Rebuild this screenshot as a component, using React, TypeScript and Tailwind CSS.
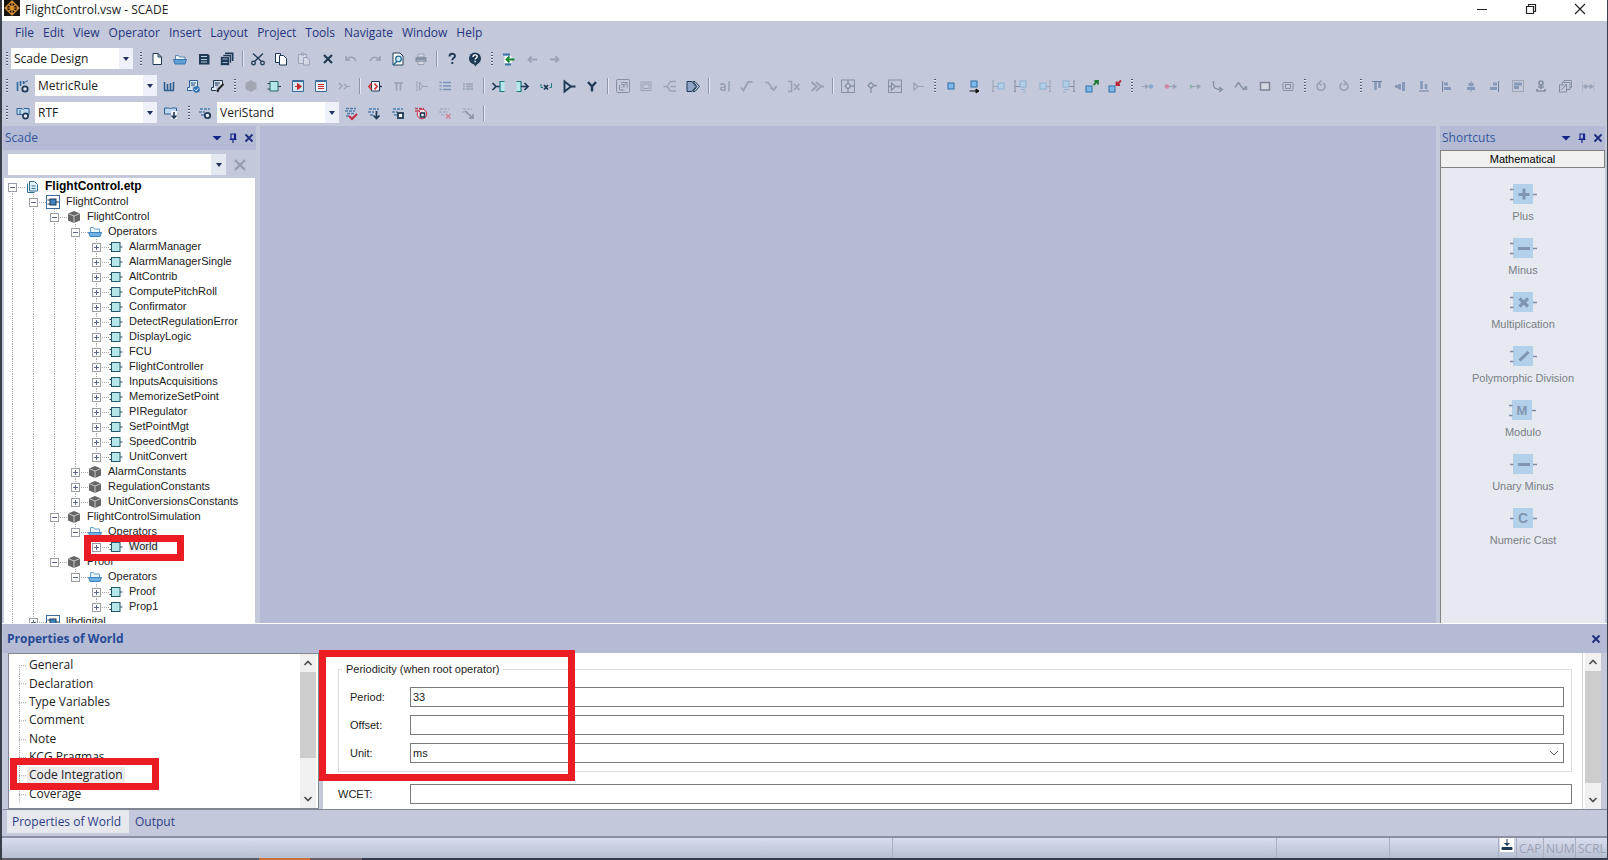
import { ReactNode, useState } from "react";

const NAVY = "#1f3a56";
const GRAY = "#99a2b6";
const BLUE = "#5f9fd6";
const TEAL = "#b5e6ea";

// ---------- toolbar glyphs, all on a 16x16 grid ----------

const nodeSquare = (x: number, y: number, fill = "#7db8ea", stroke = "#2f6fa8") => (
  <rect x={x} y={y} width="6" height="6" fill={fill} stroke={stroke} />
);

const glyphs: Record<string, ReactNode> = {
  newFile: <path d="M4 2.5h5l3.5 3.5v7.5h-8.500z M9 2.500v3.500h3.500" fill="#fff" stroke={NAVY} />,
  open: (
    <>
      <path d="M3.500 9V4.500h3l1 1.500h5.500V9" fill="#e8f3fb" stroke="#5b86ad" />
      <path d="M1.500 8.500h13l-1.500 4.500h-10z" fill={BLUE} stroke="#3c76a8" />
    </>
  ),
  save: (
    <>
      <path d="M3 3h9l1.500 1.500V13.500H3z" fill={NAVY} />
      <path d="M5 5.500h6M5 8.500h6M5 11h6" stroke="#bcd0e2" />
    </>
  ),
  saveAll: (
    <>
      <path d="M6 1.500h8.500v8.500H6z" fill={NAVY} />
      <path d="M4 3.500h8.500v8.500H4z" fill={NAVY} stroke="#c3c9da" strokeWidth=".7" />
      <path d="M1.500 5.500h9V14.500h-9z" fill={NAVY} stroke="#c3c9da" strokeWidth=".7" />
      <path d="M3.500 8h5M3.500 11.500h5" stroke="#9fb9d0" />
    </>
  ),
  cut: (
    <g fill="none" stroke={NAVY} strokeWidth="1.300">
      <path d="M3 2.500l8.500 8M13 2.500L4.500 10.500" />
      <circle cx="3.500" cy="12" r="1.800" />
      <circle cx="12.500" cy="12" r="1.800" />
    </g>
  ),
  copy: (
    <g fill="#fff" stroke={NAVY}>
      <path d="M2.500 2.500h5v9h-5z" />
      <path d="M6.500 4.500h4l3 3v6.500h-7z" />
    </g>
  ),
  paste: (
    <g fill="#d3d8e4" stroke={GRAY}>
      <path d="M2.500 3.500h8v9h-8z M5 2h3v2H5z" />
      <path d="M7.500 6.500h3.500l2.500 2.500v5h-6z" />
    </g>
  ),
  delete: <path d="M4 4l8 8M12 4l-8 8" stroke={NAVY} strokeWidth="2.200" />,
  undo: <path d="M3 5v4h4M3.500 8.500c3-3.500 7.500-3 9.500 1.500" fill="none" stroke={GRAY} strokeWidth="1.600" />,
  redo: <path d="M13 5v4H9M12.500 8.500c-3-3.500-7.500-3-9.500 1.500" fill="none" stroke={GRAY} strokeWidth="1.600" />,
  preview: (
    <>
      <path d="M3 2h7l3 3v9H3z" fill="#fff" stroke={NAVY} />
      <circle cx="8.500" cy="8" r="2.800" fill="#cfe8f5" stroke="#1f6f8e" strokeWidth="1.300" />
      <path d="M6.500 10.500L3.500 14" stroke="#1f6f8e" strokeWidth="1.500" />
    </>
  ),
  print: (
    <>
      <path d="M5 3h6v3H5z M5 10.500h6v3H5z" fill="#d3d8e4" stroke={GRAY} />
      <path d="M2.500 6h11v5h-2v-1.500h-7V11h-2z" fill="#8791a6" />
    </>
  ),
  help: <path d="M5.500 5.500c0-3.500 5.500-3.500 5.500-.5 0 2-2.700 2-2.700 4.300M8.300 11v2" fill="none" stroke={NAVY} strokeWidth="1.900" />,
  about: (
    <>
      <circle cx="8" cy="7.500" r="6" fill={NAVY} />
      <path d="M6 12l2.500 3.500L11 12z" fill={NAVY} />
      <path d="M6 6c0-2.800 4.200-2.800 4.200-.4 0 1.600-2.100 1.600-2.100 3M8.100 9.800v1.500" fill="none" stroke="#fff" strokeWidth="1.400" />
    </>
  ),
  goBack: (
    <>
      <path d="M3 3.500h7M5 13.500h6" stroke="#3c76a8" strokeWidth="2" />
      <path d="M4.500 5h7v7h-7z" fill="#fff" />
      <path d="M14.500 8.500H7M9.500 5.500l-3 3 3 3" fill="none" stroke="#1c8a35" strokeWidth="1.900" />
    </>
  ),
  left: <path d="M13 8.500H4M7.500 5.500l-3 3 3 3" fill="none" stroke={GRAY} strokeWidth="1.800" />,
  right: <path d="M3 8.500h9M8.500 5.500l3 3-3 3" fill="none" stroke={GRAY} strokeWidth="1.800" />,
  metricGear: (
    <>
      <path d="M2.500 4v9M5.500 3v5M8.500 3v3" stroke="#2d6a9c" strokeWidth="1.600" />
      <path d="M8 5.500l5-3" stroke="#2d6a9c" />
      <circle cx="10" cy="11" r="2.700" fill="#dfe6f0" stroke={NAVY} strokeWidth="1.800" />
    </>
  ),
  bars: <path d="M3.500 4v8M6.500 6v6M9.500 5v7M12.500 4v8M3 12.500h10" stroke="#2d5f92" strokeWidth="1.600" />,
  checkDoc: (
    <>
      <path d="M4.500 2.500h8v7M4.500 2.500v7h-2v3h5" fill="#d9ecf8" stroke="#2d5f92" />
      <path d="M6 5h5M6 7h4" stroke="#2d5f92" />
      <circle cx="11.500" cy="11.500" r="3.300" fill="#2f74b5" />
      <path d="M9.800 11.500l1.300 1.300 2.200-2.400" fill="none" stroke="#fff" />
    </>
  ),
  editDoc: (
    <>
      <path d="M3.500 2.500h9v5M3.500 2.500v7h-2v3h5" fill="#e3e8f0" stroke={NAVY} />
      <path d="M5 5h5M5 7h3" stroke={NAVY} />
      <path d="M7.500 14l1-3 5-5" stroke="#222" strokeWidth="2" fill="none" />
    </>
  ),
  hexagon: <path d="M8 2l5.500 3v6L8 14l-5.500-3V5z" fill="#a2a7b2" />,
  block: (
    <>
      <path d="M1.500 5.500H4M1.500 11H4M12 8.500h3" stroke={NAVY} />
      <path d="M4 3.500h8v9.500H4z" fill={TEAL} stroke="#27685f" />
    </>
  ),
  blockArrow: (
    <>
      <path d="M2.500 2.500h11v11h-11z" fill="#d6e6f4" stroke="#3a6d9c" />
      <path d="M3 3.500h10" stroke="#3a6d9c" />
      <path d="M5 8.500h4M7.500 5.500l4 3-4 3z" fill="#c32a2a" stroke="#c32a2a" />
    </>
  ),
  blockList: (
    <>
      <path d="M2.500 2.500h11v11h-11z" fill="#eef3f9" stroke="#3a6d9c" />
      <path d="M3 3.500h10" stroke="#3a6d9c" />
      <path d="M5 6.500h6M5 8.500h6M5 10.500h6" stroke="#c32a2a" strokeWidth="1.200" />
    </>
  ),
  chevPair: <path d="M3 5l3 3-3 3M8 6l3 2.500L8 11M11 8.500h3" fill="none" stroke={GRAY} strokeWidth="1.200" />,
  redGate: (
    <>
      <path d="M12.500 8.500h2.500" stroke={NAVY} strokeWidth="1.400" />
      <path d="M4.500 3.500h8v9.500h-8z" fill="#eef1f7" stroke={NAVY} />
      <path d="M4.500 5.500L2 8.500l2.500 3M7.500 5.500l2.500 3-2.500 3" fill="none" stroke="#d0342c" strokeWidth="1.700" />
    </>
  ),
  pi: <path d="M4 5h9M6.500 5v7.500M10.500 5v7.500" stroke={GRAY} strokeWidth="1.700" fill="none" />,
  fan: <path d="M3 3v10M5.500 4v8M5.500 4l3 4.500-3 4M8 8.500h6" stroke={GRAY} fill="none" />,
  lines: <path d="M2.500 4.500h2M2.500 8h2M2.500 11.500h2M6 4.500h8M6 8h8M6 11.500h8" stroke="#7b93bd" strokeWidth="1.400" />,
  linesGray: <path d="M3 6h2M3 8.500h2M3 11h2M6 6h7M6 8.500h7M6 11h7" stroke={GRAY} strokeWidth="1.300" />,
  inBracket: (
    <>
      <path d="M1.500 5l3.500 3.500L1.500 12M5 8.500h4" fill="none" stroke={NAVY} strokeWidth="1.700" />
      <path d="M13.500 3.500H9v10h4.500" fill={TEAL} stroke="#1f7a80" strokeWidth="1.200" />
    </>
  ),
  outBracket: (
    <>
      <path d="M2.500 3.500H7v10H2.500" fill={TEAL} stroke="#1f7a80" strokeWidth="1.200" />
      <path d="M7 8.500h7M10.500 5l3.500 3.500-3.500 3.500" fill="none" stroke={NAVY} strokeWidth="1.700" />
    </>
  ),
  cross: (
    <>
      <path d="M6 7l4 4.500M10 7l-4 4.500" stroke={NAVY} strokeWidth="1.800" />
      <path d="M3 6v3.500h2M13.500 5v4.500h-2" fill="none" stroke="#1f7a80" />
    </>
  ),
  triangle: <path d="M3.500 3.500v10l6.500-5zM10 8.500h4.500" fill="none" stroke={NAVY} strokeWidth="1.900" />,
  fork: <path d="M4 4l4 4.500 4-4.500M8 8v5.500" fill="none" stroke={NAVY} strokeWidth="2.400" />,
  frameEdit: (
    <g fill="none" stroke="#8690a5">
      <rect x="1.500" y="1.500" width="13" height="13" rx="1" />
      <path d="M6 4.500h6v5M4.500 7v5h5M6 6.500h3v3M12 4.500l-5 5" />
    </g>
  ),
  frame: <path d="M3 4h10v8.500H3zM5 6h6v4.500H5z" fill="none" stroke={GRAY} />,
  split: <path d="M1.500 8.500H5M14 3.500H8.500L5 8.500l3.500 4.500H14M8 8.500h6" fill="none" stroke={GRAY} strokeWidth="1.300" />,
  tagArrow: (
    <>
      <path d="M2 3.500h5l4 5-4 5H2z" fill="#8fa3c4" stroke={NAVY} />
      <path d="M8 3.500h2l4.500 5-4.500 5H8l4-5z" fill="#c7d0e2" stroke={NAVY} />
    </>
  ),
  textA: <path d="M4 6.500c4-1.500 5 0 5 1.500v5M9 9c-6-.5-6 4 0 3M13 3v10.500" fill="none" stroke={GRAY} strokeWidth="1.600" />,
  tick: <path d="M2 9.500l2.500 3L9 4h4.500" fill="none" stroke={GRAY} strokeWidth="1.900" />,
  bend: <path d="M2 4.500h3l5 7h1M13.500 8l-2.500 4-3.500-2" fill="none" stroke={GRAY} strokeWidth="1.700" />,
  bracketX: <path d="M2 3.500h3.500v10H2M8 6l5.500 6M13.500 6L8 12" fill="none" stroke={GRAY} strokeWidth="1.600" />,
  chevDouble: <path d="M2.500 4l5 4.500-5 4.500M7 4l5 4.500L7 13M12 8.500h3" fill="none" stroke={GRAY} strokeWidth="1.900" />,
  diamondFrame: (
    <g fill="none" stroke="#8690a5">
      <rect x="1.500" y="2" width="13" height="12.500" />
      <path d="M8 2v3M8 11v3.500M11 8h3.500M8 5l3 3-3 3-3-3z" strokeWidth="1.300" />
    </g>
  ),
  diamond: <path d="M8 4.500l3 3-3 3-3-3zM11 7.500h3M8 10.500V15" fill="none" stroke="#8690a5" strokeWidth="1.300" />,
  arrowFrame: (
    <g fill="none" stroke="#8690a5">
      <rect x="1.500" y="2" width="13" height="12.500" />
      <path d="M4.500 5v7l4-3.500zM8.500 8.500h5M2 8.500h2" strokeWidth="1.300" />
    </g>
  ),
  arrowThin: <path d="M4 5v7l4-3.500zM8 8.500h6" fill="none" stroke={GRAY} strokeWidth="1.200" />,
  sq: nodeSquare(5, 5),
  sqArrow: (
    <>
      {nodeSquare(5, 3)}
      <path d="M3.500 13H12M10 11l3 2-3 2z" stroke="#111" fill="#111" />
    </>
  ),
  distL: (
    <>
      <path d="M2 3h2M2 13.500h2M3 3v10M3 8.500h5" stroke={GRAY} />
      {nodeSquare(8, 5, "#b2cfe9", "#8fb0d2")}
    </>
  ),
  distLs: (
    <>
      <path d="M1 3h2M1 13.500h2M2 3v10M2 8.500h5" stroke="#8690a5" />
      {nodeSquare(7, 3, "#b2cfe9", "#8fb0d2")}
      <path d="M8 11.500h4M10 14h3" stroke="#8fb0d2" />
    </>
  ),
  distR: (
    <>
      <path d="M12 3h2M12 13.500h2M13 3v10M9 8.500h4" stroke={GRAY} />
      {nodeSquare(3, 5, "#b2cfe9", "#8fb0d2")}
    </>
  ),
  distRs: (
    <>
      <path d="M13 3h2M13 13.500h2M14 3v10M9 8.500h5" stroke="#8690a5" />
      {nodeSquare(3, 3, "#b2cfe9", "#8fb0d2")}
      <path d="M4 11.500h5M3 14h3" stroke="#8fb0d2" />
    </>
  ),
  expand: (
    <>
      {nodeSquare(2, 8)}
      <path d="M9.500 7l4-4M10.500 3H14v3.500" stroke="#1f7a35" strokeWidth="1.800" fill="none" />
    </>
  ),
  shrink: (
    <>
      {nodeSquare(2, 8)}
      <path d="M14 2.500l-4 4M9.500 3.500v3.500h3.500" stroke="#b32435" strokeWidth="1.800" fill="none" />
    </>
  ),
  linkIn: (
    <>
      <path d="M1.500 8.500h7M5.500 6.500l3 2-3 2z" stroke={GRAY} fill={GRAY} />
      <circle cx="11" cy="8.500" r="2.300" fill="#8ba6cc" />
    </>
  ),
  linkOut: (
    <>
      <circle cx="4" cy="8.500" r="2.300" fill="#cf8ba0" />
      <path d="M6 8.500h7M10.500 6.500l3 2-3 2z" stroke={GRAY} fill={GRAY} />
    </>
  ),
  linkTri: (
    <>
      <path d="M3 6l4 2.500L3 11z" fill="#8fb3ae" />
      <path d="M6 8.500h7M10.500 6.500l3 2-3 2z" stroke={GRAY} fill={GRAY} />
    </>
  ),
  curve: <path d="M3.500 3v4c0 4 3 4.500 7 4.500M10 9.500l2.500 2-2.500 2z" fill="none" stroke="#8690a5" strokeWidth="1.300" />,
  wave: <path d="M2 9.500l3.500-5 5 7 2-1M11 9l2.500 0v3" fill="none" stroke="#8690a5" strokeWidth="1.400" />,
  rect: <rect x="3.500" y="4.500" width="9" height="7.500" fill="#d4d8e2" stroke="#7c8494" strokeWidth="1.500" />,
  rect2: (
    <g fill="none" stroke="#8a92a4">
      <rect x="3" y="4.500" width="10" height="8" rx="1" />
      <rect x="5.500" y="6.500" width="5" height="4" />
    </g>
  ),
  rotL: <path d="M6 5a4 4 0 1 0 4 0M8.500 2.500L6 5l2.500 2.500" fill="none" stroke={GRAY} strokeWidth="1.700" />,
  rotR: <path d="M10 5a4 4 0 1 1-4 0M7.500 2.500L10 5 7.500 7.500" fill="none" stroke={GRAY} strokeWidth="1.700" />,
  alignT: (
    <>
      <path d="M6.500 4v8M10.500 4v6" stroke="#8699b8" strokeWidth="2.600" />
      <path d="M3 3.500h10" stroke="#6f7f9c" />
    </>
  ),
  alignM: <path d="M3 8.500h3M7.500 6v5.500M11.500 4v9" stroke="#8699b8" strokeWidth="3" />,
  alignB: (
    <>
      <path d="M5.500 3v8M10 6v5" stroke="#8699b8" strokeWidth="2.600" />
      <path d="M3 13h10" stroke="#6f7f9c" />
    </>
  ),
  alignL: (
    <>
      <path d="M5 6h4M5 10.500h7" stroke="#8699b8" strokeWidth="3" />
      <path d="M3.500 3v11" stroke="#6f7f9c" />
    </>
  ),
  alignC: (
    <>
      <path d="M8 3v11" stroke="#8699b8" />
      <path d="M5.500 6.500h5M4 10.500h8" stroke="#8699b8" strokeWidth="3" />
    </>
  ),
  alignR: (
    <>
      <path d="M7 6h4M4 10.500h7" stroke="#8699b8" strokeWidth="3" />
      <path d="M12.500 3v11" stroke="#6f7f9c" />
    </>
  ),
  gridBox: (
    <>
      <rect x="2.500" y="2.500" width="11" height="11" fill="none" stroke="#7f8899" strokeDasharray="1 1" />
      <path d="M4 6h8M4 9.500h5" stroke="#8699b8" strokeWidth="3" />
    </>
  ),
  anchor: (
    <g fill="none" stroke="#8690a5" strokeWidth="1.700">
      <circle cx="8" cy="5" r="2" />
      <path d="M8 7v4M5 9h6M4 11v2h8v-2" />
    </g>
  ),
  cubes: (
    <g fill="none" stroke="#8690a5">
      <rect x="2.500" y="7" width="7" height="7" />
      <path d="M5 7V4.500h8v7H9.500M7 4.500V2.500h7.500v7H13M4 12l6-6" />
    </g>
  ),
  fitWidth: (
    <>
      <path d="M2.500 3.500v10M14 3.500v10" stroke="#b0b7c8" />
      <path d="M4 8.500h8.500M6.500 6.500L4 8.500l2.500 2M10 6.500l2.500 2-2.500 2" fill="none" stroke={GRAY} strokeWidth="1.600" />
    </>
  ),
  bookGear: (
    <>
      <path d="M2 3.500h5l1 1 1-1h5v6H2z" fill="#bcd8ee" stroke="#2d5f92" />
      <path d="M4 6h2M4 8h2" stroke="#2d5f92" />
      <circle cx="10.500" cy="11" r="2.600" fill="#e6edf5" stroke={NAVY} strokeWidth="1.700" />
    </>
  ),
  bookDown: (
    <>
      <path d="M1.500 3h5l1 1 1-1h5v6h-12z" fill="#bcd8ee" stroke="#2d5f92" />
      <path d="M8 6h6v8H8z" fill="#f2f5fa" />
      <path d="M11 7v6M8.500 10.500L11 13l2.500-2.500" fill="none" stroke={NAVY} strokeWidth="1.600" />
    </>
  ),
  codeGear: (
    <>
      <path d="M3 4h10M2 7h6M4 10h3" stroke="#4f7fae" strokeWidth="1.400" strokeDasharray="3 1" />
      <circle cx="10.500" cy="10.500" r="2.700" fill="#e6edf5" stroke={NAVY} strokeWidth="1.800" />
    </>
  ),
  codeCheck: (
    <>
      <path d="M3 3.500h10M2 6h10M4 8.500h8M3 11h3" stroke="#4f7fae" strokeWidth="1.400" strokeDasharray="3 1" />
      <path d="M6 11l3 3 5-5" fill="none" stroke="#c32a44" strokeWidth="2" />
    </>
  ),
  codeDown: (
    <>
      <path d="M3 4h10M2 7h6M4 10h3" stroke="#4f7fae" strokeWidth="1.400" strokeDasharray="3 1" />
      <path d="M10.500 6v7M7.500 10.500l3 3 3-3" fill="none" stroke={NAVY} strokeWidth="1.700" />
    </>
  ),
  codeStop: (
    <>
      <path d="M3 4h10M2 7h6M4 10h3" stroke="#4f7fae" strokeWidth="1.400" strokeDasharray="3 1" />
      <rect x="8" y="8" width="5" height="5" fill="#fff" stroke={NAVY} strokeWidth="1.800" />
    </>
  ),
  codeCancel: (
    <>
      <path d="M2 3.500h9M2 6h3" stroke="#b3475c" strokeWidth="1.400" strokeDasharray="3 1" />
      <circle cx="9" cy="9" r="4.800" fill="#f3dfe4" stroke="#c32a44" />
      <rect x="7.500" y="8" width="4" height="4" fill="#fff" stroke={NAVY} strokeWidth="1.600" />
      <path d="M5.500 5.500l3 3" stroke="#c32a44" />
    </>
  ),
  codeX: (
    <>
      <path d="M3 4h9M2 7h9M4 10h4" stroke={GRAY} strokeWidth="1.200" strokeDasharray="3 1" />
      <path d="M9 9l4.500 4.500M13.500 9L9 13.500" stroke="#cf7f92" strokeWidth="1.400" />
    </>
  ),
  codeArrow: (
    <>
      <path d="M3 4h9M2 7h6" stroke={GRAY} strokeWidth="1.200" strokeDasharray="3 1" />
      <path d="M5 6l8 7M13 9v4H9" stroke="#8690a5" strokeWidth="1.500" fill="none" />
    </>
  ),
};

const Tool = ({ name }: { name: string }) => (
  <button type="button" aria-label={name} className="flex min-w-0 flex-1 items-center justify-center">
    <svg viewBox="0 0 16 16" className="size-4 shrink-0">{glyphs[name]}</svg>
  </button>
);

const Group = ({ names, width }: { names: string[]; width: string }) => (
  <div className={"flex h-full shrink-0 " + width}>
    {names.map((n) => <Tool key={n} name={n} />)}
  </div>
);

const Sep = () => (
  <div className="flex w-[7px] shrink-0 justify-center">
    <div className="h-4 w-px bg-[#8d96ad] shadow-[1px_0_0_#e4e8f2]" />
  </div>
);

const Dots = () => (
  <div className="flex w-[9px] shrink-0 flex-col items-center gap-[2px]">
    {[0, 1, 2, 3, 4].map((i) => (
      <div key={i} className="h-px w-[2px] bg-[#4b5470] shadow-[0_1px_0_#e4e8f2]" />
    ))}
  </div>
);

const ToolSelect = ({ label, value }: { label: string; value: string }) => (
  <div className="relative h-[21px] w-[122px] shrink-0">
    <select aria-label={label} className="h-full w-full appearance-none bg-white pl-[3px] text-xs leading-5 text-[#222]">
      <option>{value}</option>
    </select>
    <div className="pointer-events-none absolute inset-y-0 right-0 flex w-[14px] items-center justify-center bg-[#eef1f7]">
      <svg viewBox="0 0 6 4" className="h-1 w-[6px]"><path d="M0 0h6L3 4z" fill="#20305e" /></svg>
    </div>
  </div>
);

// ---------- project tree ----------

type TreeRow = { level: number; label: string; icon: "doc" | "model" | "cube" | "folder" | "op"; open?: boolean };

const operators = [
  "AlarmManager", "AlarmManagerSingle", "AltContrib", "ComputePitchRoll", "Confirmator",
  "DetectRegulationError", "DisplayLogic", "FCU", "FlightController", "InputsAcquisitions",
  "MemorizeSetPoint", "PIRegulator", "SetPointMgt", "SpeedContrib", "UnitConvert",
];

const tree: TreeRow[] = [
  { level: 0, label: "FlightControl.etp", icon: "doc", open: true },
  { level: 1, label: "FlightControl", icon: "model", open: true },
  { level: 2, label: "FlightControl", icon: "cube", open: true },
  { level: 3, label: "Operators", icon: "folder", open: true },
  ...operators.map((label): TreeRow => ({ level: 4, label, icon: "op" })),
  { level: 3, label: "AlarmConstants", icon: "cube" },
  { level: 3, label: "RegulationConstants", icon: "cube" },
  { level: 3, label: "UnitConversionsConstants", icon: "cube" },
  { level: 2, label: "FlightControlSimulation", icon: "cube", open: true },
  { level: 3, label: "Operators", icon: "folder", open: true },
  { level: 4, label: "World", icon: "op" },
  { level: 2, label: "Proof", icon: "cube", open: true },
  { level: 3, label: "Operators", icon: "folder", open: true },
  { level: 4, label: "Proof", icon: "op" },
  { level: 4, label: "Prop1", icon: "op" },
  { level: 1, label: "libdigital", icon: "model" },
];

const treeIcons: Record<TreeRow["icon"], ReactNode> = {
  doc: (
    <>
      <path d="M2.500 3.500v9h7" fill="none" stroke="#2f6c96" />
      <path d="M4.500 1.500h5l3 3v6.500h-8z" fill="#e3f1fa" stroke="#2f6c96" />
      <path d="M6.500 6h4M6.500 8.500h4" stroke="#2f6c96" />
    </>
  ),
  model: (
    <>
      <rect x=".5" y=".5" width="13" height="13" fill="#fff" stroke="#3c6c9c" />
      <path d="M1.500 5h3M1.500 9h3M10 7h3" stroke={NAVY} />
      <rect x="4" y="4" width="6" height="6" fill="#3f84bf" stroke={NAVY} />
    </>
  ),
  cube: (
    <>
      <path d="M7 1l6 2.500v7L7 13l-6-2.500v-7z" fill="#666" />
      <path d="M1 3.500L7 6l6-2.500M7 6v7" fill="none" stroke="#c9c9c9" />
    </>
  ),
  folder: (
    <>
      <path d="M2.500 8V2.500h3l1 1.500h5V8" fill="#eaf4fb" stroke="#6aa0cc" />
      <path d="M.5 7.500h13l-1.500 4h-10z" fill="#6fb0e2" stroke="#3c83bd" />
    </>
  ),
  op: (
    <>
      <path d="M.5 4.500h2M.5 9.500h2M11 7h2.500" stroke="#27485f" />
      <rect x="2.500" y="2.500" width="8.500" height="9" fill={TEAL} stroke="#27586a" />
    </>
  ),
};

// true when a later row is a sibling at that level
const continues = (index: number, level: number) => {
  if (level === 0) return true;
  const next = tree.slice(index + 1).find((r) => r.level <= level);
  return !!next && next.level === level;
};

const TreeItem = ({ row, index }: { row: TreeRow; index: number }) => (
  <li className="relative flex h-[15px] items-center whitespace-nowrap">
    {Array.from({ length: row.level }, (_, k) => (
      <svg key={k} viewBox="0 0 21 15" className="h-[15px] w-[21px] shrink-0">
        {continues(index, k) && <path d="M8.500 0v15" stroke="#a9a9a9" strokeDasharray="1 1" />}
      </svg>
    ))}
    <button type="button" aria-label={"Toggle " + row.label} className="shrink-0">
      <svg viewBox="0 0 21 15" className="h-[15px] w-[21px]">
        {index > 0 && <path d="M8.500 0v7" stroke="#a9a9a9" strokeDasharray="1 1" />}
        {continues(index, row.level) && <path d="M8.500 8v7" stroke="#a9a9a9" strokeDasharray="1 1" />}
        <path d="M14 8.500h7" stroke="#a9a9a9" strokeDasharray="1 1" />
        <rect x="4.500" y="4.500" width="8" height="8" fill="#fff" stroke="#9a9da4" />
        <path d={row.open ? "M6 8.500h5" : "M6 8.500h5M8.500 6v5"} stroke="#5a668c" />
      </svg>
    </button>
    <svg viewBox="0 0 14 14" className="size-[14px] shrink-0">{treeIcons[row.icon]}</svg>
    <span className={row.level === 0 ? "pl-[6px] text-xs font-bold leading-[15px] text-black" : "pl-[6px] text-[11px] leading-[15px]"}>
      <span className={row.label === "World" ? "bg-[#ebebeb]" : ""}>{row.label}</span>
    </span>
    {row.label === "World" && (
      <div className="absolute -top-1 left-[80px] z-10 h-[26px] w-[100px] border-[7px] border-[#ec1c24]" />
    )}
  </li>
);

// ---------- small shared parts ----------

const CloseX = ({ color = "#1f2f80" }: { color?: string }) => (
  <svg viewBox="0 0 10 10" className="size-[10px]"><path d="M1.500 1.500l7 7M8.500 1.500l-7 7" stroke={color} strokeWidth="1.900" /></svg>
);

const PanelHeader = ({ title }: { title: string }) => (
  <div className="flex h-6 shrink-0 items-center bg-[#b5bbd4] pl-[2px] pr-[2px] text-xs text-[#36569c]">
    <h2 className="flex-1">{title}</h2>
    <div className="flex items-center gap-[6px]">
      <button type="button" aria-label="Panel menu">
        <svg viewBox="0 0 10 10" className="size-[10px]"><path d="M.5 3h9L5 7.500z" fill="#14248a" /></svg>
      </button>
      <button type="button" aria-label="Pin panel">
        <svg viewBox="0 0 10 10" className="size-[10px]">
          <path d="M3 1h4.500v5H3zM6.500 1v5M1.500 6.500h7M5 6.500V10" fill="none" stroke="#14248a" strokeWidth="1.200" />
        </svg>
      </button>
      <button type="button" aria-label="Close panel"><CloseX /></button>
    </div>
  </div>
);

const ScrollBar = ({ thumb }: { thumb: string }) => (
  <div className="flex w-4 shrink-0 flex-col items-center bg-[#f0f0f0]">
    <svg viewBox="0 0 16 18" className="h-[18px] w-4"><path d="M4.500 11L8 7.500l3.500 3.500" fill="none" stroke="#505050" strokeWidth="1.700" /></svg>
    <div className={"w-full bg-[#cdcdcd] " + thumb} />
    <div className="flex-1" />
    <svg viewBox="0 0 16 18" className="h-[18px] w-4"><path d="M4.500 7L8 10.500 11.500 7" fill="none" stroke="#505050" strokeWidth="1.700" /></svg>
  </div>
);

const shortcuts: { label: string; glyph: ReactNode; unary?: boolean }[] = [
  { label: "Plus", glyph: <path d="M14 4.500v11M8.500 10.500h11" stroke="#7f95b0" strokeWidth="3" /> },
  { label: "Minus", glyph: <path d="M8 10.500h12" stroke="#7f95b0" strokeWidth="3" /> },
  { label: "Multiplication", glyph: <path d="M9.500 6.500l8.500 8M18 6.500l-8.500 8" stroke="#7f95b0" strokeWidth="3.200" /> },
  { label: "Polymorphic Division", glyph: <path d="M9.500 14.500l9-8.500" stroke="#7f95b0" strokeWidth="3" /> },
  { label: "Modulo", glyph: <text x="13" y="15" textAnchor="middle" fontSize="13" fontWeight="bold" fill="#7f95b0">M</text> },
  { label: "Unary Minus", unary: true, glyph: <path d="M8 10.500h12" stroke="#7f95b0" strokeWidth="3" /> },
  { label: "Numeric Cast", unary: true, glyph: <text x="13" y="15" textAnchor="middle" fontSize="14" fontWeight="bold" fill="#7f95b0">C</text> },
];

const menus = ["File", "Edit", "View", "Operator", "Insert", "Layout", "Project", "Tools", "Navigate", "Window", "Help"];
const pages = ["General", "Declaration", "Type Variables", "Comment", "Note", "KCG Pragmas", "Code Integration", "Coverage"];

const fieldClass = "h-5 w-full min-w-0 appearance-none border border-[#7a7a7a] bg-white px-[2px] text-[11px] text-[#222] outline-none";

export default function App() {
  const [period, setPeriod] = useState("33");
  const [offset, setOffset] = useState("");
  const [wcet, setWcet] = useState("");
  const [search, setSearch] = useState("");

  return (
    <div className="flex h-screen flex-col overflow-hidden border-l-2 border-r border-[#3a3f4c] bg-[#c3c9da] font-['Open_Sans','Noto_Sans',sans-serif] text-xs">
      {/* Title bar */}
      <header className="flex h-[21px] shrink-0 items-center bg-white pl-[2px] pr-[3px] text-[#222]">
        <svg viewBox="0 0 16 16" className="size-4 self-start">
          <rect width="16" height="16" fill="#1a1410" />
          <path d="M8 1l7 7-7 7-7-7z M8 1v14M1 8h14M4.500 4.500l7 7M11.500 4.500l-7 7" fill="none" stroke="#e0952e" strokeWidth="1.200" />
        </svg>
        <h1 className="flex-1 pb-[2px] pl-[5px]">FlightControl.vsw - SCADE</h1>
        <button type="button" aria-label="Minimize" className="flex w-[49px] justify-center pb-1">
          <svg viewBox="0 0 12 12" className="size-3"><path d="M1 6.500h10" stroke="#222" /></svg>
        </button>
        <button type="button" aria-label="Restore" className="flex w-[49px] justify-center pb-1">
          <svg viewBox="0 0 12 12" className="size-3">
            <path d="M1.500 3.500h7v7h-7zM3.500 3.500v-2h7v7h-2" fill="none" stroke="#222" strokeWidth="1.200" />
          </svg>
        </button>
        <button type="button" aria-label="Close" className="flex w-[49px] justify-center pb-1">
          <svg viewBox="0 0 12 12" className="size-3"><path d="M1 1l10 10M11 1L1 11" stroke="#222" strokeWidth="1.200" /></svg>
        </button>
      </header>

      {/* Menu */}
      <nav className="flex h-6 shrink-0 items-center gap-[9px] pl-[13px] text-[#27347f]">
        {menus.map((m) => <button type="button" key={m}>{m}</button>)}
      </nav>

      {/* Toolbars */}
      <div className="flex h-[27px] shrink-0 items-center">
        <Dots />
        <ToolSelect label="View mode" value="Scade Design" />
        <div className="w-[3px]" />
        <Dots />
        <Group width="w-[94px]" names={["newFile", "open", "save", "saveAll"]} />
        <Sep />
        <Group width="w-[187px]" names={["cut", "copy", "paste", "delete", "undo", "redo", "preview", "print"]} />
        <Sep />
        <Group width="w-[47px]" names={["help", "about"]} />
        <Dots />
        <Group width="w-[71px]" names={["goBack", "left", "right"]} />
      </div>
      <div className="flex h-[27px] shrink-0 items-center">
        <Dots />
        <Group width="w-6" names={["metricGear"]} />
        <ToolSelect label="Metric rule" value="MetricRule" />
        <Group width="w-[73px]" names={["bars", "checkDoc", "editDoc"]} />
        <Dots />
        <Group width="w-[117px]" names={["hexagon", "block", "blockArrow", "blockList", "chevPair"]} />
        <Sep />
        <Group width="w-[117px]" names={["redGate", "pi", "fan", "lines", "linesGray"]} />
        <Sep />
        <Group width="w-[117px]" names={["inBracket", "outBracket", "cross", "triangle", "fork"]} />
        <Sep />
        <Group width="w-[94px]" names={["frameEdit", "frame", "split", "tagArrow"]} />
        <Sep />
        <Group width="w-[117px]" names={["textA", "tick", "bend", "bracketX", "chevDouble"]} />
        <Sep />
        <Group width="w-[94px]" names={["diamondFrame", "diamond", "arrowFrame", "arrowThin"]} />
        <Dots />
        <Group width="w-[188px]" names={["sq", "sqArrow", "distL", "distLs", "distR", "distRs", "expand", "shrink"]} />
        <Dots />
        <Group width="w-[164px]" names={["linkIn", "linkOut", "linkTri", "curve", "wave", "rect", "rect2"]} />
        <Dots />
        <Group width="w-[47px]" names={["rotL", "rotR"]} />
        <Dots />
        <Group width="w-[235px]" names={["alignT", "alignM", "alignB", "alignL", "alignC", "alignR", "gridBox", "anchor", "cubes", "fitWidth"]} />
      </div>
      <div className="flex h-[27px] shrink-0 items-center">
        <Dots />
        <Group width="w-6" names={["bookGear"]} />
        <ToolSelect label="Report format" value="RTF" />
        <Group width="w-[27px]" names={["bookDown"]} />
        <Dots />
        <Group width="w-6" names={["codeGear"]} />
        <ToolSelect label="Target" value="VeriStand" />
        <Group width="w-[141px]" names={["codeCheck", "codeDown", "codeStop", "codeCancel", "codeX", "codeArrow"]} />
        <Sep />
      </div>

      {/* Workspace */}
      <div className="flex min-h-0 flex-1">
        <aside className="flex w-[254px] shrink-0 flex-col overflow-hidden pl-px">
          <PanelHeader title="Scade" />
          <div className="flex h-7 shrink-0 items-center pl-[5px] pt-px">
            <input
              aria-label="Search"
              value={search}
              onChange={(e) => setSearch(e.target.value)}
              className="h-[21px] w-[203px] bg-white px-1 outline-none"
            />
            <button type="button" aria-label="Search history" className="flex h-[21px] w-[15px] items-center justify-center bg-[#e4e8f1]">
              <svg viewBox="0 0 6 4" className="h-1 w-[6px]"><path d="M0 0h6L3 4z" fill="#20305e" /></svg>
            </button>
            <button type="button" aria-label="Clear search" className="pl-2">
              <svg viewBox="0 0 12 12" className="size-3"><path d="M1 1l10 10M11 1L1 11" stroke="#959cab" strokeWidth="2" /></svg>
            </button>
          </div>
          <ul className="mx-px min-h-0 flex-1 overflow-hidden bg-white pt-px font-['Liberation_Sans',sans-serif] text-[#222]">
            {tree.map((row, i) => <TreeItem key={i} row={row} index={i} />)}
          </ul>
        </aside>
        <main className="ml-1 flex-1 bg-[#b5bbd4]" />
        <aside className="ml-1 flex w-[165px] shrink-0 flex-col overflow-hidden font-['Liberation_Sans',sans-serif]">
          <div className="font-['Open_Sans','Noto_Sans',sans-serif]">
            <PanelHeader title="Shortcuts" />
          </div>
          <button type="button" className="h-[18px] shrink-0 border border-[#808080] bg-[#f0f0f0] text-[11px] leading-4 text-black">
            Mathematical
          </button>
          <div className="flex flex-1 flex-col items-center gap-[14px] border-l border-[#808080] bg-[#e6e9f0] pt-4">
            {shortcuts.map((s) => (
              <button type="button" key={s.label} className="flex flex-col items-center gap-1 text-[11px] leading-4 text-[#7b7f88]">
                <svg viewBox="0 0 27 20" className="h-5 w-[27px]">
                  <rect x="3" width="20" height="20" fill="#b3d0ea" />
                  <path d={s.unary ? "M0 10.500h3.500M23 10.500h4" : "M0 5.500h3.500M0 15.500h3.500M23 10.500h4"} stroke="#7d8ea5" strokeWidth="1.300" />
                  {s.glyph}
                </svg>
                {s.label}
              </button>
            ))}
          </div>
        </aside>
        <div className="w-[2px]" />
      </div>

      {/* Properties */}
      <section className="shrink-0 border-t border-white pl-px">
        <div className="flex h-[29px] items-center bg-[#b5bbd4] pl-1 pr-[6px]">
          <h2 className="flex-1 font-bold text-[#274a96]">Properties of World</h2>
          <button type="button" aria-label="Close properties"><CloseX /></button>
        </div>
        <div className="flex h-[157px] border-b border-[#7f8698] pl-[5px] pr-[6px]">
          <div className="relative flex w-[311px] shrink-0 border border-[#828790] bg-white pr-[2px]">
            <ul className="flex h-[149px] min-w-0 flex-1 flex-col pl-[10px] pt-[2px] text-[#222]">
              {pages.map((p, i) => (
                <li key={p} className="flex flex-1 items-center">
                  <svg viewBox="0 0 8 18" preserveAspectRatio="none" className="h-full w-2 shrink-0">
                    <path d={i === 0 ? "M.5 9v9M0 9.500h8" : "M.5 0v18M0 9.500h8"} stroke="#a0a0a0" strokeDasharray="1 1" fill="none" />
                  </svg>
                  <button type="button" className={p === "Code Integration" ? "bg-[#ececec] px-[2px] leading-4" : "px-[2px] leading-4"}>{p}</button>
                </li>
              ))}
            </ul>
            <ScrollBar thumb="h-[86px]" />
            <div className="pointer-events-none absolute left-px top-[104px] z-10 h-8 w-[149px] border-[7px] border-[#ec1c24]" />
          </div>
          <form className="relative ml-1 flex-1 overflow-visible bg-white pl-[15px] pr-[10px] pt-[9px] font-['Liberation_Sans',sans-serif] text-[11px] text-[#222]">
            <fieldset className="flex flex-col gap-2 border border-[#dcdcdc] px-[7px] pb-2 leading-[14px]">
              <legend className="-ml-1 px-1">Periodicity (when root operator)</legend>
              <div className="flex items-center pl-1 pt-[11px]">
                <label htmlFor="period" className="w-[60px] shrink-0">Period:</label>
                <input id="period" value={period} onChange={(e) => setPeriod(e.target.value)} className={fieldClass} />
              </div>
              <div className="flex items-center pl-1">
                <label htmlFor="offset" className="w-[60px] shrink-0">Offset:</label>
                <input id="offset" value={offset} onChange={(e) => setOffset(e.target.value)} className={fieldClass} />
              </div>
              <div className="relative flex items-center pl-1">
                <label htmlFor="unit" className="w-[60px] shrink-0">Unit:</label>
                <select id="unit" className={fieldClass}>
                  <option>ms</option>
                </select>
                <svg viewBox="0 0 10 6" className="pointer-events-none absolute right-[5px] h-[6px] w-[10px]">
                  <path d="M1 1l4 4 4-4" fill="none" stroke="#555" />
                </svg>
              </div>
            </fieldset>
            <div className="flex items-center pt-3">
              <label htmlFor="wcet" className="w-[72px] shrink-0">WCET:</label>
              <input id="wcet" value={wcet} onChange={(e) => setWcet(e.target.value)} className={fieldClass} />
            </div>
            <div className="pointer-events-none absolute -left-1 -top-[3px] z-10 h-[131px] w-[256px] border-[7px] border-[#ec1c24]" />
          </form>
          <div className="flex border-l border-[#d5d8e0] bg-white pl-[2px]">
            <ScrollBar thumb="h-[112px]" />
          </div>
        </div>
        <div className="flex h-[26px] items-start text-[#2f3d86]">
          <button type="button" className="ml-1 h-[23px] w-[122px] bg-[#e6e8ee] pl-[5px] pt-px text-left">Properties of World</button>
          <button type="button" className="h-[23px] pl-[6px] pt-px">Output</button>
        </div>
      </section>

      {/* Status bar */}
      <footer className="flex h-[22px] shrink-0 items-stretch border-t-2 border-[#8a90a2] bg-linear-to-b from-[#d8dded] to-[#b7bfd3] text-[#9ba1b6]">
        <div className="flex-1 border-r border-[#a9b0c4]" />
        <div className="w-[384px] border-r border-[#a9b0c4]" />
        <div className="w-[113px] border-r border-[#a9b0c4]" />
        <div className="w-[109px] border-r border-[#a9b0c4]" />
        <div className="w-[18px] border-r border-[#a9b0c4] pl-px">
          <svg viewBox="0 0 14 14" className="size-[14px] bg-white">
            <path d="M7 1v6M4.500 5L7 7.500 9.500 5M2 9.500h10v2H2z" fill={NAVY} stroke={NAVY} />
          </svg>
        </div>
        <div className="w-[27px] border-r border-[#a9b0c4] pl-[2px] pt-[3px] leading-4">CAP</div>
        <div className="w-[32px] border-r border-[#a9b0c4] pl-[2px] pt-[3px] leading-4">NUM</div>
        <div className="w-[31px] pl-[2px] pt-[3px] leading-4">SCRL</div>
      </footer>
      <div className="flex h-[2px] shrink-0 bg-[#333a4a]">
        <div className="w-[257px] bg-[#5c5c64]" />
        <div className="w-[51px] bg-[#c9703a]" />
        <div className="w-[52px] bg-[#6b5f66]" />
      </div>
    </div>
  );
}
